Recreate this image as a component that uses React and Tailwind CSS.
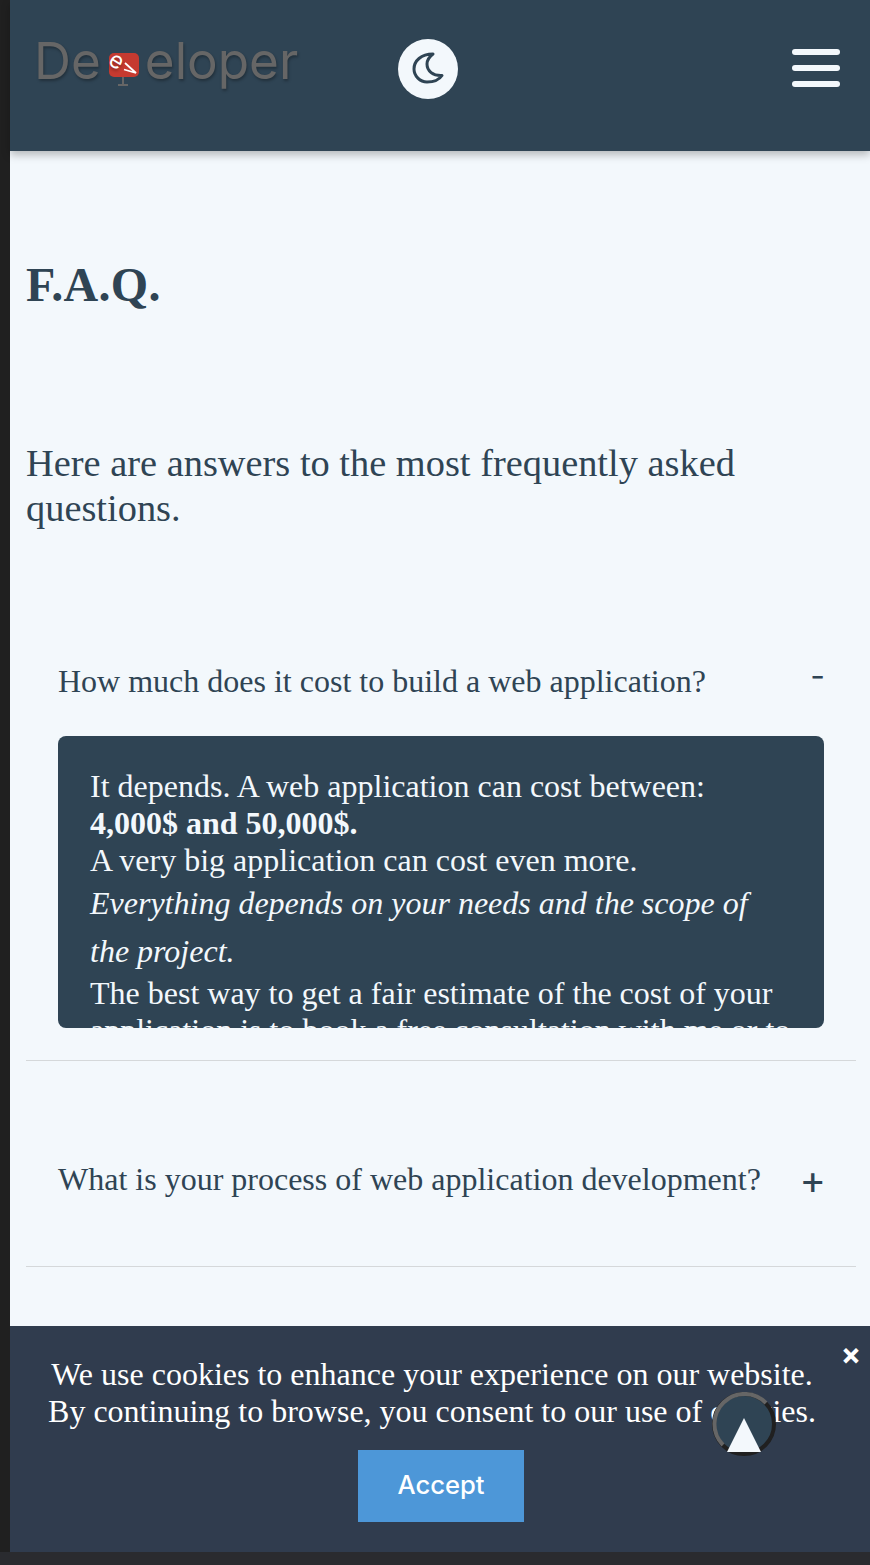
import React from 'react';

const serif = "font-['Liberation_Serif',serif]";

const Logo = () => (
  <div className="flex items-start font-['Inter',sans-serif] text-[51.200px] leading-[58px] text-[#666666] [text-shadow:1px_2px_3px_rgba(0,0,0,0.3)]">
    <span>De</span>
    <svg width="38" height="36" viewBox="0 0 38 36" className="mt-[22px] ml-[5px] mr-[1px] shrink-0 overflow-visible">
      <rect x="3" y="0" width="30" height="24" rx="5" fill="#c53a30" />
      <path d="M17 24v7M12 32h10" stroke="#666666" strokeWidth="2" fill="none" />
      <text x="10" y="15" textAnchor="middle" transform="rotate(32 10 9)" fontFamily="Inter, sans-serif" fontSize="23" fill="#ffffff">e</text>
      <path d="M19 10l11 10-12-3.500" stroke="#ffffff" strokeWidth="1.800" fill="none" />
    </svg>
    <span>eloper</span>
  </div>
);

const Header = () => (
  <header className="h-[151px] bg-[#2f4454] shadow-[0_4px_8px_rgba(0,0,0,0.25)] flex items-start relative z-10">
    <div className="w-[388px] pl-[24px] pt-[31px] shrink-0"><Logo /></div>
    <button className="w-[60px] h-[60px] mt-[39px] rounded-full bg-[#f3f8fc]">
      <svg width="60" height="60" viewBox="0 0 60 60">
        <path d="M35 15C23 15 16 22 16 30C16 37 22 43 29 43C35 43 41 41 44 36.500C35 37 29 32 29 25C29 21 31 18 35 15Z" fill="none" stroke="#2f4454" strokeWidth="3" strokeLinejoin="round" />
      </svg>
    </button>
    <div className="ml-auto mr-[30px] mt-[49px] flex flex-col gap-[10px]">
      <span className="block w-[48px] h-[6px] rounded-full bg-[#f3f8fc]" />
      <span className="block w-[48px] h-[6px] rounded-full bg-[#f3f8fc]" />
      <span className="block w-[48px] h-[6px] rounded-full bg-[#f3f8fc]" />
    </div>
  </header>
);

const Answer = () => (
  <div className="mt-[36px] mx-[32px] h-[292px] bg-[#2f4454] rounded-lg overflow-hidden px-[32px] pt-[32px] text-[32px] leading-[37px] text-[#f3f8fc]">
    <p>It depends. A web application can cost between:</p>
    <p className="font-bold">4,000$ and 50,000$.</p>
    <p>A very big application can cost even more.</p>
    <p className="italic leading-[48px]">Everything depends on your needs and the scope of the project.</p>
    <p>The best way to get a fair estimate of the cost of your application is to book a free consultation with me or to</p>
  </div>
);

export default function App() {
  return (
    <div className={`min-h-[1565px] bg-[#202020] pl-[10px] ${serif}`}>
      <div className="min-h-[1565px] bg-[#f3f8fc] text-[#2f4454]">
        <Header />
        <main className="pl-[16px] pr-[14px]">
          <h1 className="pt-[104px] text-[48px] leading-[60px] font-bold tracking-[0.3px]">F.A.Q.</h1>
          <p className="mt-[126px] text-[38.400px] leading-[45px]">Here are answers to the most frequently asked questions.</p>
          <section className="mt-[72px]">
            <div className="pb-[32px] border-b border-[#d5d8da]">
              <div className="flex justify-between items-start px-[32px] pt-[60px] text-[32px] leading-[37px]">
                <span>How much does it cost to build a web application?</span>
                <span className="font-['Inter',sans-serif] text-[32px] leading-[26px] -mr-[1px]">-</span>
              </div>
              <Answer />
            </div>
            <div className="h-[206px] border-b border-[#d5d8da] flex justify-between items-start px-[32px] pt-[100px] text-[32px] leading-[37px]">
              <span>What is your process of web application development?</span>
              <span className="font-['Inter',sans-serif] text-[40px] leading-[37px] -mr-[2px]">+</span>
            </div>
          </section>
        </main>
      </div>

      <div className="fixed left-[10px] right-0 bottom-[13px] h-[226px] bg-[#303c4e] text-[#ffffff] text-center pt-[30px] text-[32px] leading-[37px]">
        <div className="pr-[16px]">
          <p>We use cookies to enhance your experience on our website.</p>
          <p>By continuing to browse, you consent to our use of cookies.</p>
        </div>
        <button className="mt-[20px] ml-[2px] w-[166px] h-[72px] pb-[4px] bg-[#4d97d8] font-['Inter',sans-serif] font-medium text-[25.600px]">Accept</button>
        <button className="absolute right-[9px] top-[16px] text-[30px] leading-[24px] font-bold font-['Inter',sans-serif]">×</button>
      </div>
      <div className="fixed left-0 right-0 bottom-0 h-[13px] bg-[#2a2b2f]" />

      {/* scroll to top */}
      <div className="fixed left-[712px] top-[1392px] w-[64px] h-[64px]">
        <svg width="64" height="64" viewBox="0 0 64 64">
          <circle cx="32" cy="32" r="30" fill="#2f4454" />
          <circle cx="32" cy="32" r="30" fill="none" stroke="#202020" strokeWidth="4" />
          <path d="M11 53A30 30 0 1 1 54 11" fill="none" stroke="#666666" strokeWidth="4" />
          <polygon points="32,26 49,60 15,60" fill="#f3f8fc" />
        </svg>
      </div>
    </div>
  );
}
